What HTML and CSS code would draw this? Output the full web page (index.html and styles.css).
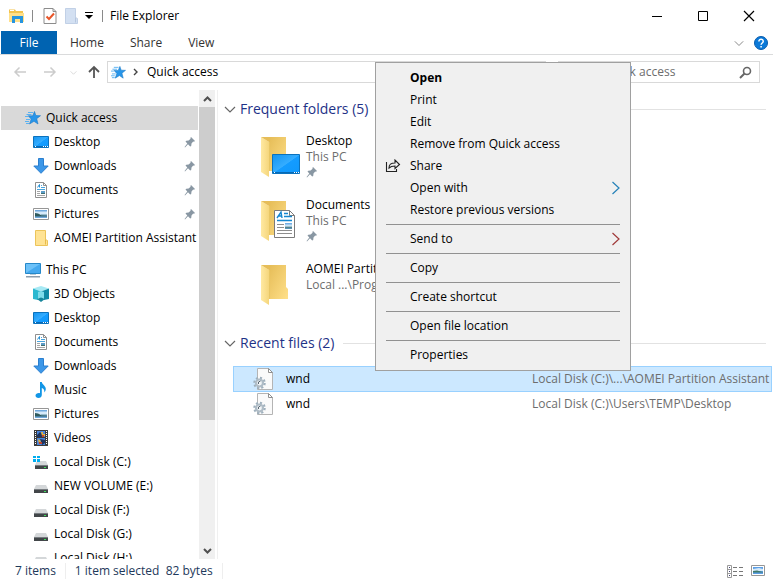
FILE: index.html
```html
<!DOCTYPE html>
<html lang="en">
<head>
	<meta charset="utf-8">
	<title>File Explorer</title>
	<link rel="stylesheet" href="styles.css">
</head>
<body>
	<!-- shared icons -->
	<svg class="defs" width="0" height="0">
		<defs>
			<linearGradient id="blue" x1="0" y1="0" x2="1" y2="1">
				<stop offset="0" stop-color="#1494f0"/><stop offset=".5" stop-color="#35adff"/><stop offset=".52" stop-color="#149cff"/><stop offset="1" stop-color="#0f98fc"/>
			</linearGradient>
			<linearGradient id="flap" x1="0" y1="0" x2="1" y2="0">
				<stop offset="0" stop-color="#ffe9a2"/><stop offset="1" stop-color="#f5d67c"/>
			</linearGradient>
			<linearGradient id="back" x1="0" y1="0" x2="1" y2="1">
				<stop offset="0" stop-color="#e6bd58"/><stop offset="1" stop-color="#ffe08a"/>
			</linearGradient>
			<linearGradient id="sky" x1="0" y1="0" x2="0" y2="1">
				<stop offset="0" stop-color="#5aa0e0"/><stop offset=".5" stop-color="#e2f2fc"/><stop offset=".7" stop-color="#4f7f86"/><stop offset="1" stop-color="#5f9cc8"/>
			</linearGradient>
		</defs>
		<symbol id="star" viewBox="0 0 16 16">
			<path d="M9.500 1.500l1.300 4 4.700.2-3.800 3 1.300 5.300-4-2.700-4.500 2.700 1.700-5-3-3.200h4.500z" fill="#2795e9" stroke="#1979c8" stroke-width=".6"/>
			<path d="M3 2.500h5M1.500 4.500h5M0 6.500h3M1 9.500h4M0 11.500h4M1 13.500h3" stroke="#5ab2f2" stroke-width="1"/>
		</symbol>
		<symbol id="desktop" viewBox="0 0 16 16">
			<path d="M.5 2.500h15v11h-15z" fill="url(#blue)" stroke="#0b72bd"/>
			<path d="M1 12.500h14" stroke="#0769b5"/>
			<path d="M2 12.500h1M10 12.500h1M12 12.500h1M14 12.500h1" stroke="#fff"/>
		</symbol>
		<symbol id="download" viewBox="0 0 16 16">
			<path d="M5.500.5h5v7.500h4.700L8 15.300.8 8h4.700z" fill="#3c97e8" stroke="#2b7fcf"/>
		</symbol>
		<symbol id="document" viewBox="0 0 16 16">
			<path d="M2.500.5h8l3 3v12h-11z" fill="#fff" stroke="#8f8f8f"/>
			<path d="M10.500.5v3h3" fill="none" stroke="#8f8f8f"/>
			<path d="M4.500 5.500l2-3v3" fill="none" stroke="#2490d4"/>
			<path d="M8 3.500h1M8 5.500h4M4 7.500h8" fill="none" stroke="#4aa5de"/>
			<path d="M4 9.500h3M4 11.500h3M4 13.500h8" stroke="#a5a5a5"/>
			<path d="M8 9h4v3H8z" fill="#5d9dc9"/><path d="M8 11h4v1H8z" fill="#3f6f72"/>
		</symbol>
		<symbol id="picture" viewBox="0 0 16 16">
			<path d="M.5 2.500h15v11h-15z" fill="#fff" stroke="#969696"/>
			<path d="M2 4h12v8H2z" fill="#6fa8dc"/>
			<path d="M2 5.500h12V9H2z" fill="#d6eafa"/>
			<path d="M2 7l3 .5 3 1.500 6 .5v1H2z" fill="#2f5b5e"/>
			<path d="M8 8.500h6v1H8z" fill="#5f8fa0"/>
		</symbol>
		<symbol id="smallfolder" viewBox="0 0 16 16">
			<path d="M2.500.5h10v9l2 1v5h-12z" fill="#ffe394" stroke="#ecc45a"/>
			<path d="M12.500 9.500v5" stroke="#e8bb4b"/>
		</symbol>
		<symbol id="pc" viewBox="0 0 16 16">
			<path d="M.5 1.500h15v10H.5z" fill="#6cc1f8" stroke="#2688c9"/>
			<path d="M1 11L15 2v9z" fill="#45a9ef"/>
			<path d="M5 12h6v1H5z" fill="#b8cbd8"/><path d="M1 14h14v1.500H1z" fill="#8b9dad"/>
		</symbol>
		<symbol id="cube" viewBox="0 0 16 16">
			<path d="M8 0l8 2.500-8 3-8-3z" fill="#a6e9f4"/>
			<path d="M0 2.500l8 3v3l-3 1V14l-5-1z" fill="#2bb8d0"/>
			<path d="M16 2.500l-8 3v3l3 1V14l5-1z" fill="#118aa5"/>
			<path d="M5 6l3-1 3 1v6.500L8 13.500l-3-1z" fill="#7fdcea"/>
			<path d="M4 13l4-1.500 4 1.500-4 3z" fill="#17869c"/>
		</symbol>
		<symbol id="music" viewBox="0 0 16 16">
			<path d="M7 0h1.800c.3 2.600 4.200 4 4 7 0 1.600-.8 2.600-1.500 3.500.4-2.700-.8-4-2.500-4.500v7c0 1.800-1.500 3-3.300 3S2.500 15 2.500 13.600c0-1.700 2.500-3 4.500-2.300z" fill="#1296e6"/>
		</symbol>
		<symbol id="video" viewBox="0 0 16 16">
			<path d="M1 0h14v16H1z" fill="#3b3b3b"/>
			<path d="M4 1h8v6H4zM4 8h8v7H4z" fill="#4a84da"/>
			<path d="M4 5l3-3 2 2v3H4zM7 9l5 1v3l-3 2z" fill="#1d3561"/>
			<path d="M8 2h2v2h2v2H9zM5 9l3 2-2 3z" fill="#e3b13a"/><path d="M9 5h2v2H9zM6 12h3v2H6z" fill="#c1442e"/>
			<path d="M2.500 1v14M13.500 1v14" stroke="#fff" stroke-width="1" stroke-dasharray="1 1"/>
		</symbol>
		<symbol id="disk" viewBox="0 0 16 16">
			<path d="M3 7h10l2 4H1z" fill="#d4d7d9"/>
			<path d="M1 11h14v4H1z" fill="#424649"/><path d="M1 11h14v1H1z" fill="#777c80"/>
			<path d="M11 13h2v1h-2z" fill="#3ee05a"/>
		</symbol>
		<symbol id="windisk" viewBox="0 0 16 16">
			<path d="M4 7h9l2 4H2z" fill="#d4d7d9"/>
			<path d="M2 11h13v4H2z" fill="#424649"/><path d="M2 11h13v1H2z" fill="#777c80"/>
			<path d="M11 13h2v1h-2z" fill="#3ee05a"/>
			<path d="M0 2h3v2H0zM4 2h3v2H4zM0 5h3v3H0zM4 5h3v3H4z" fill="#00adef"/>
		</symbol>
		<symbol id="pin" viewBox="0 0 12 12">
			<path d="M7 1l4 4-1 .8-.8-.2L7.500 7.500 7.200 10l-1 .6L4 8.200 1 11.400l-.4-.4L3.300 7.500 1.500 5.500 2.300 4.700l2.300-.2 2-1.700L6.400 2z" fill="#8997a3"/>
		</symbol>
		<symbol id="folder" viewBox="0 0 42 42">
			<path d="M10 1h16v22l2 2v10H10z" fill="url(#back)"/>
			<path d="M1 1l8 5v35l-8-5z" fill="url(#flap)"/>
			<path d="M1 1h9v5H9z" fill="#e6bd58"/>
			<path d="M9.500 6v29" stroke="#e9c766"/>
		</symbol>
		<symbol id="settingsfile" viewBox="0 0 20 24">
			<path d="M4.500 1.500h11l4 4v17h-15z" fill="#fafafa" stroke="#b4b4b4"/>
			<path d="M15.500 1.500v4h4z" fill="#fff" stroke="#909090"/>
			<circle cx="6.500" cy="16" r="5" fill="none" stroke="#9fb0bd" stroke-width="2.500" stroke-dasharray="2 1.900"/>
			<circle cx="6.500" cy="16" r="3.500" fill="#f2f5f7" stroke="#afbcc6" stroke-width="2.200"/>
			<path d="M5.500 17v-2l2-1" fill="none" stroke="#596873"/>
		</symbol>
		<symbol id="down" viewBox="0 0 12 12"><path d="M1 4l5 5 5-5" fill="none" stroke="currentColor" stroke-width="1.200"/></symbol>
		<symbol id="next" viewBox="0 0 10 16"><path d="M1.500 2l6.500 6-6.500 6" fill="none" stroke="currentColor" stroke-width="1.200"/></symbol>
	</svg>

	<div class="window">
		<header class="titlebar">
			<svg class="app-icon" width="16" height="16" viewBox="0 0 16 16">
				<path d="M0 1.500h6l1 1.500h7v11H0z" fill="#f3c44f"/><path d="M0 5h15v9H0z" fill="#ffe08a"/><path d="M3 8h11v7h-3v-4H6v4H3z" fill="#2795df"/><path d="M1 2h4v1H1z" fill="#fff"/>
			</svg>
			<span class="sep"></span>
			<button class="quick" aria-label="Properties"><svg width="14" height="16" viewBox="0 0 14 16"><path d="M1 .5h9l3 3v12H1z" fill="#fff" stroke="#8c8c8c"/><path d="M10 .5v3h3" fill="none" stroke="#8c8c8c"/><path d="M3.500 8.500L6 11l5-5.500" fill="none" stroke="#e8562a" stroke-width="2"/></svg></button>
			<button class="quick" aria-label="New folder"><svg width="14" height="16" viewBox="0 0 14 16"><path d="M.5.5h10v9l2 1v5H.5z" fill="#d3e0f2" stroke="#c1d0e6"/><path d="M10.500 9.500v5" stroke="#b5c6de"/></svg></button>
			<button class="more" aria-label="Customize"><svg width="8" height="8" viewBox="0 0 8 8"><path d="M0 .5h8" stroke="#000"/><path d="M0 3h8L4 7z"/></svg></button>
			<span class="sep"></span>
			<h1 class="title">File Explorer</h1>
			<div class="controls">
				<button aria-label="Minimize"><svg width="12" height="12" viewBox="0 0 12 12"><path d="M1 6.500h10" stroke="#000"/></svg></button>
				<button aria-label="Maximize"><svg width="12" height="12" viewBox="0 0 12 12"><path d="M1.500 1.500h9v9h-9z" fill="none" stroke="#000"/></svg></button>
				<button aria-label="Close"><svg width="12" height="12" viewBox="0 0 12 12"><path d="M1 1l10 10M11 1L1 11" stroke="#000" stroke-width="1.200"/></svg></button>
			</div>
		</header>

		<div class="ribbon">
			<button class="tab file">File</button>
			<button class="tab">Home</button>
			<button class="tab">Share</button>
			<button class="tab">View</button>
			<div class="ribbon-right">
				<button class="expand" aria-label="Expand the ribbon"><svg width="10" height="10"><use href="#down"/></svg></button>
				<button aria-label="Help"><svg width="14" height="14" viewBox="0 0 14 14"><circle cx="7" cy="7" r="6.500" fill="#0b79d8" stroke="#0a5cac"/><path d="M4.900 5.400c0-3 4.400-2.800 4.300 0 0 1.600-2.100 1.600-2.100 3.400M7.100 10v1.500" fill="none" stroke="#fff" stroke-width="1.500"/></svg></button>
			</div>
		</div>

		<div class="addressbar">
			<div class="arrows">
				<button class="off" aria-label="Back"><svg width="14" height="12" viewBox="0 0 14 12"><path d="M13 6H2M6.500 1.500L2 6l4.500 4.500" fill="none" stroke="currentColor" stroke-width="1.500"/></svg></button>
				<button class="off" aria-label="Forward"><svg width="14" height="12" viewBox="0 0 14 12"><path d="M1 6h11M7.500 1.500L12 6l-4.500 4.500" fill="none" stroke="currentColor" stroke-width="1.500"/></svg></button>
				<button class="off recent" aria-label="Recent locations"><svg width="7" height="7"><use href="#down"/></svg></button>
				<button class="up" aria-label="Up"><svg width="12" height="14" viewBox="0 0 12 14"><path d="M6 13V2M1 7l5-5 5 5" fill="none" stroke="currentColor" stroke-width="1.800"/></svg></button>
			</div>
			<div class="path">
				<svg width="15" height="15"><use href="#star"/></svg>
				<svg class="crumb" width="5" height="8" viewBox="0 0 5 8"><path d="M1 1l3 3-3 3" fill="none" stroke="currentColor" stroke-width="1.400"/></svg>
				<span>Quick access</span>
			</div>
			<div class="search">
				<input type="text" placeholder="Search Quick access" aria-label="Search Quick access">
				<svg width="13" height="13" viewBox="0 0 13 13"><circle cx="8" cy="5" r="3.500" fill="none" stroke="#666" stroke-width="1.600"/><path d="M5.500 7.500L1 12" stroke="#666" stroke-width="2"/></svg>
			</div>
		</div>

		<div class="main">
			<nav class="tree">
				<ul>
					<li class="root selected"><svg><use href="#star"/></svg><a href="#">Quick access</a></li>
					<li><svg><use href="#desktop"/></svg><a href="#">Desktop</a><svg class="pin"><use href="#pin"/></svg></li>
					<li><svg><use href="#download"/></svg><a href="#">Downloads</a><svg class="pin"><use href="#pin"/></svg></li>
					<li><svg><use href="#document"/></svg><a href="#">Documents</a><svg class="pin"><use href="#pin"/></svg></li>
					<li><svg><use href="#picture"/></svg><a href="#">Pictures</a><svg class="pin"><use href="#pin"/></svg></li>
					<li><svg><use href="#smallfolder"/></svg><a href="#">AOMEI Partition Assistant</a></li>
				</ul>
				<ul>
					<li class="root"><svg><use href="#pc"/></svg><a href="#">This PC</a></li>
					<li><svg><use href="#cube"/></svg><a href="#">3D Objects</a></li>
					<li><svg><use href="#desktop"/></svg><a href="#">Desktop</a></li>
					<li><svg><use href="#document"/></svg><a href="#">Documents</a></li>
					<li><svg><use href="#download"/></svg><a href="#">Downloads</a></li>
					<li><svg><use href="#music"/></svg><a href="#">Music</a></li>
					<li><svg><use href="#picture"/></svg><a href="#">Pictures</a></li>
					<li><svg><use href="#video"/></svg><a href="#">Videos</a></li>
					<li><svg><use href="#windisk"/></svg><a href="#">Local Disk (C:)</a></li>
					<li><svg><use href="#disk"/></svg><a href="#">NEW VOLUME (E:)</a></li>
					<li><svg><use href="#disk"/></svg><a href="#">Local Disk (F:)</a></li>
					<li><svg><use href="#disk"/></svg><a href="#">Local Disk (G:)</a></li>
					<li><svg><use href="#disk"/></svg><a href="#">Local Disk (H:)</a></li>
				</ul>
			</nav>
			<div class="scrollbar">
				<button aria-label="Scroll up"><svg width="9" height="16" viewBox="0 0 9 16"><path d="M1 10l3.500-3.500L8 10" fill="none" stroke="#505050" stroke-width="2"/></svg></button>
				<div class="track"><div class="thumb"></div></div>
				<button aria-label="Scroll down"><svg width="9" height="16" viewBox="0 0 9 16"><path d="M1 6l3.500 3.500L8 6" fill="none" stroke="#505050" stroke-width="2"/></svg></button>
			</div>

			<main class="content">
				<h2><svg width="12" height="12"><use href="#down"/></svg>Frequent folders (5)</h2>
				<div class="tiles">
					<div class="tile">
						<svg width="42" height="42" viewBox="0 0 42 42"><use href="#folder" width="42" height="42"/><path d="M12.500 18.500h27v19h-27z" fill="url(#blue)" stroke="#0b72bd"/><path d="M13 36.500h26" stroke="#0769b5"/><path d="M14 36.500h1M34 36.500h1M36 36.500h1M38 36.500h1" stroke="#fff"/></svg>
						<div>
							<p>Desktop</p>
							<p class="where">This PC</p>
							<svg class="pin"><use href="#pin"/></svg>
						</div>
					</div>
					<div class="tile">
						<svg width="42" height="42" viewBox="0 0 42 42"><use href="#folder" width="42" height="42"/><path d="M14.500 10.500h15l5 5v22h-20z" fill="#fff" stroke="#7b7b7b"/><path d="M29.500 10.500v5h5" fill="none" stroke="#7b7b7b"/><path d="M17 18l4-6 1 6M18.500 16h3M24 13.500h4M24 16.500h8M17 20.500h15" fill="none" stroke="#1687cf" stroke-width="1.400"/><path d="M17 24.500h7M17 27.500h7M17 30.500h15M17 33.500h15" stroke="#8e8e8e"/><path d="M25 23h7v6h-7z" fill="url(#sky)"/></svg>
						<div>
							<p>Documents</p>
							<p class="where">This PC</p>
							<svg class="pin"><use href="#pin"/></svg>
						</div>
					</div>
					<div class="tile">
						<svg width="42" height="42"><use href="#folder"/></svg>
						<div>
							<p>AOMEI Partition Assistant</p>
							<p class="where">Local ...\Program Files (x86)</p>
						</div>
					</div>
				</div>
				<h2><svg width="12" height="12"><use href="#down"/></svg>Recent files (2)</h2>
				<div class="files">
					<div class="row selected"><svg width="20" height="24"><use href="#settingsfile"/></svg><span>wnd</span><span class="where">Local Disk (C:)\...\AOMEI Partition Assistant</span></div>
					<div class="row"><svg width="20" height="24"><use href="#settingsfile"/></svg><span>wnd</span><span class="where">Local Disk (C:)\Users\TEMP\Desktop</span></div>
				</div>
			</main>
		</div>

		<footer class="status">
			<span class="cell">7 items</span>
			<span class="cell">1 item selected&nbsp; 82 bytes</span>
			<div class="views">
				<button aria-label="Details"><svg width="16" height="13" viewBox="0 0 16 13"><path d="M.5.5h4v12h-4zM.5 4.500h4M.5 8.500h4" fill="none" stroke="#9a9a9a"/><path d="M6 2.500h4M12 2.500h4M6 6.500h4M12 6.500h4M6 10.500h4M12 10.500h4" stroke="#777"/><path d="M2 2.500h1M2 6.500h1M2 10.500h1" stroke="#447"/></svg></button>
				<button aria-label="Large icons"><svg width="14" height="14" viewBox="1 1 14 14"><path d="M1.500 2.500h13v10h-13z" fill="#fff" stroke="#969696"/><path d="M3 4h10v7H3z" fill="#5c9fe6"/><path d="M3 6l6-1 4 1v2H3z" fill="#d6eafa"/><path d="M3 8l4-.5 6 1.500v.5H3z" fill="#3f7a6a"/></svg></button>
			</div>
		</footer>
	</div>

	<div class="menu" role="menu">
		<button role="menuitem" class="default">Open</button>
		<button role="menuitem">Print</button>
		<button role="menuitem">Edit</button>
		<button role="menuitem">Remove from Quick access</button>
		<button role="menuitem"><svg class="glyph" width="16" height="14" viewBox="0 0 16 14"><path d="M1.500 3v9.500h10V10M4 9c0-3.500 2-5 6-5V1l4.500 4.500L10 9.500V7c-3 0-4.500.5-6 2z" fill="none" stroke="#222" stroke-width="1.100"/></svg>Share</button>
		<button role="menuitem">Open with<svg class="sub" width="10" height="16"><use href="#next"/></svg></button>
		<button role="menuitem">Restore previous versions</button>
		<hr>
		<button role="menuitem">Send to<svg class="sub red" width="10" height="16"><use href="#next"/></svg></button>
		<hr>
		<button role="menuitem">Copy</button>
		<hr>
		<button role="menuitem">Create shortcut</button>
		<hr>
		<button role="menuitem">Open file location</button>
		<hr>
		<button role="menuitem">Properties</button>
	</div>
</body>
</html>
```
FILE: styles.css
```css
* {
	box-sizing: border-box;
}

body {
	margin: 0;
	background: #fff;
	color: #000;
	font: 12px/16px "Open Sans", "Noto Sans", sans-serif;
}

button {
	display: flex;
	align-items: center;
	justify-content: center;
	padding: 0;
	border: 0;
	background: none;
	color: inherit;
	font: inherit;
}

svg {
	display: block;
	flex: none;
}

.defs {
	position: absolute;
}

h1, h2, p, ul {
	margin: 0;
	padding: 0;
	font-weight: normal;
}

.window {
	display: flex;
	flex-direction: column;
	height: 100vh;
	overflow: hidden;
}

/* title bar */
.titlebar {
	display: flex;
	align-items: center;
	flex: none;
	height: 31px;
	padding: 0 1px 0 9px;
}

.sep {
	width: 1px;
	height: 12px;
	margin: 0 7px;
	background: #8a8a8a;
}

.quick {
	width: 22px;
}

.quick:first-of-type {
	margin-left: -1px;
}

.more {
	width: 12px;
}

.title {
	font-size: 12px;
}

.controls {
	display: flex;
	margin-left: auto;
}

.controls button {
	width: 46px;
	height: 30px;
}

/* ribbon tabs */
.ribbon {
	display: flex;
	flex: none;
	height: 24px;
	padding: 0 5px 0 1px;
	border-bottom: 1px solid #dadbdc;
}

.tab {
	padding: 0 13px;
	color: #333;
}

.file {
	width: 56px;
	background: #0063b1;
	color: #fff;
}

.ribbon-right {
	display: flex;
	gap: 10px;
	margin-left: auto;
	color: #888;
}

/* address and search */
.addressbar {
	display: flex;
	flex: none;
	gap: 12px;
	padding: 6px 13px 7px;
}

.arrows {
	display: flex;
	align-items: center;
	gap: 16px;
	margin-right: -5px;
}

.off {
	color: #ccc;
}

.recent {
	margin: 0 -3px;
}

.up {
	margin-left: -2px;
	color: #555;
}

.path {
	display: flex;
	align-items: center;
	flex: 1;
	height: 22px;
	padding-left: 3px;
	border: 1px solid #d9d9d9;
}

.crumb {
	margin: 0 9px 0 7px;
	color: #444;
}

.search {
	display: flex;
	align-items: center;
	width: 202px;
	height: 22px;
	padding: 0 7px 0 4px;
	border: 1px solid #d9d9d9;
}

.search input {
	flex: 1;
	min-width: 0;
	padding: 0;
	border: 0;
	outline: 0;
	font: inherit;
}

.search input::placeholder {
	color: #6d6d6d;
}

/* navigation tree */
.main {
	display: flex;
	flex: 1;
	min-height: 0;
}

.tree {
	width: 198px;
	padding-top: 16px;
	overflow: hidden;
}

.tree ul {
	margin-bottom: 8px;
	list-style: none;
}

.tree li {
	display: flex;
	align-items: center;
	gap: 5px;
	height: 24px;
	margin-left: 1px;
	padding: 0 2px 0 32px;
}

.tree .root {
	padding-left: 24px;
}

.tree .selected {
	background: #d9d9d9;
}

.tree svg {
	width: 16px;
	height: 16px;
}

.tree a {
	flex: 1;
	color: inherit;
	text-decoration: none;
	white-space: nowrap;
}

svg.pin,
.tree svg.pin {
	width: 12px;
	height: 12px;
}

.scrollbar {
	display: flex;
	flex-direction: column;
	width: 16px;
	margin-left: 1px;
	background: #f0f0f0;
}

.scrollbar button {
	height: 17px;
}

.track {
	flex: 1;
}

.thumb {
	height: 72%;
	background: #cdcdcd;
}

/* folder contents */
.content {
	flex: 1;
	min-width: 0;
	margin-left: 2px;
	padding-top: 9px;
	border-left: 1px solid #f0f0f0;
}

h2 {
	display: flex;
	align-items: center;
	gap: 4px;
	margin: 0 7px 14px 6px;
	color: #1e3287;
	font-size: 14px;
	line-height: 20px;
}

h2 svg {
	color: #666;
}

h2::after {
	content: "";
	flex: 1;
	height: 1px;
	margin-left: 4px;
	background: #e2e2e2;
}

.tiles {
	display: grid;
	gap: 16px;
	margin: 0 0 24px 42px;
}

.tile {
	display: flex;
	align-items: center;
	gap: 4px;
	height: 48px;
}

.tile > div {
	align-self: flex-start;
}

.tile .pin {
	margin: 1px 0;
}

.where {
	color: #6d6d6d;
}

.files {
	display: grid;
	margin: -1px 1px 0 15px;
}

.row {
	display: grid;
	grid-template-columns: 33px 1fr 239px;
	align-items: center;
	height: 26px;
	margin-bottom: -1px;
	padding-left: 19px;
	border: 1px solid transparent;
	white-space: nowrap;
}

.row.selected {
	border-color: #99d1ff;
	background: #cce8ff;
}

/* status bar */
.status {
	display: flex;
	align-items: center;
	flex: none;
	height: 24px;
	padding: 0 8px 0 6px;
	color: #1e395b;
}

.cell {
	padding: 0 9px;
	border-right: 1px solid #eee;
}

.views {
	display: flex;
	gap: 8px;
	margin-left: auto;
}

/* context menu */
.menu {
	position: absolute;
	top: 62px;
	left: 375px;
	width: 256px;
	padding: 4px 0;
	border: 1px solid #a0a0a0;
	background: #f0f0f0;
}

.menu button {
	position: relative;
	justify-content: flex-start;
	width: 100%;
	height: 22px;
	padding-left: 34px;
}

.menu .default {
	font-weight: bold;
}

.menu hr {
	height: 1px;
	margin: 3px 10px;
	border: 0;
	background: #919191;
}

.glyph {
	position: absolute;
	left: 9px;
}

.sub {
	position: absolute;
	right: 9px;
	color: #2481b8;
}

.red {
	color: #a03a3a;
}
```
